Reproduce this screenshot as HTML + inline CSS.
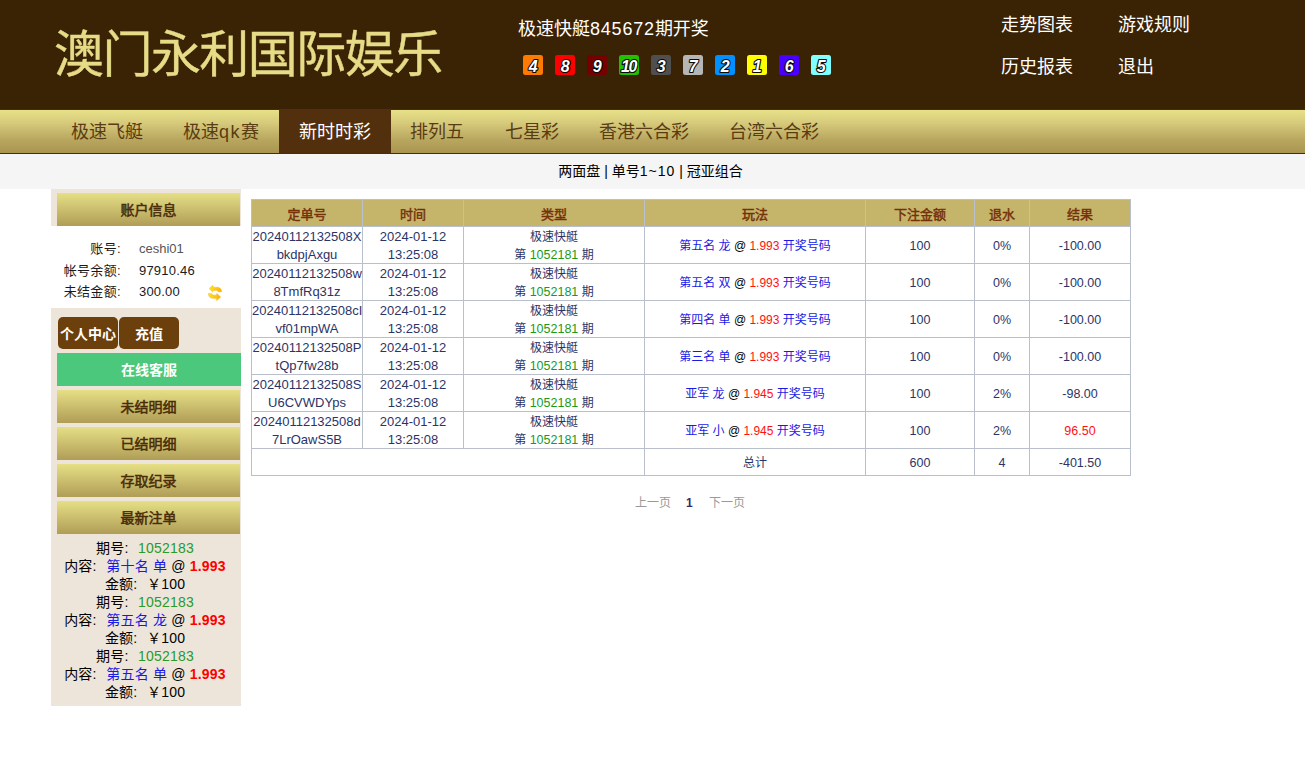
<!DOCTYPE html>
<html lang="zh-CN">
<head>
<meta charset="utf-8">
<title>澳门永利国际娱乐</title>
<style>
*{box-sizing:border-box;margin:0;padding:0}
html,body{width:1305px;height:767px;overflow:hidden;background:#fff}
body{font-family:"Liberation Sans","Noto Sans CJK SC",sans-serif;font-size:13px;color:#333;position:relative}
.hd{position:absolute;left:0;top:0;width:1305px;height:109px;background:#3a2304}
.logo{position:absolute;left:54px;top:19.5px;font-size:50px;line-height:70px;color:#e6dc87;white-space:nowrap;letter-spacing:-1.55px;-webkit-text-stroke:.4px #e6dc87}
.kj{position:absolute;left:518px;top:16px;font-size:18px;line-height:26px;color:#fff;white-space:nowrap}
.tl{position:absolute;color:#fff;font-size:18px;line-height:26px;white-space:nowrap}
.hd{height:110px}.nav{position:absolute;left:0;top:109px;width:1305px;height:45px;background:linear-gradient(#e8e188,#d6ca7b 30%,#b8a65e 70%,#a9954f);border-bottom:1px solid #4a2b0a;border-top:1px solid #4a2b0a}
.nav a{position:absolute;top:0;height:43px;line-height:45px;font-size:18px;color:#5b3b12;white-space:nowrap}
.nav a.on{background:#52300e;color:#fff;text-align:center;top:-1px;height:44px;line-height:47px}
.sub{position:absolute;left:0;top:154px;width:1305px;height:35px;background:#f5f5f5;text-align:center;font-size:14px;line-height:35px;color:#000;padding-right:4px}
.side{position:absolute;left:51px;top:189px;width:190px;height:517px;background:#ede5da}
.gb{position:absolute;left:6px;width:183px;height:33px;background:linear-gradient(#e6df86,#b09d57);color:#4a2c08;font-weight:normal;-webkit-text-stroke:.5px #4a2c08;font-size:14px;line-height:35px;text-align:center}
.info{position:absolute;left:0;top:37px;width:190px;height:82px;background:#fff}
.info div{position:absolute;font-size:13px;line-height:20px;color:#1a1a1a;white-space:nowrap}.info .lb{right:120px;letter-spacing:.35px}.info .vl{left:88px;letter-spacing:.2px}
.bb{position:absolute;top:128px;height:32px;background:#6b400c;border-radius:5px;color:#fff;font-weight:bold;font-size:14px;line-height:35px;overflow:hidden;text-align:center;white-space:nowrap}
.kf{position:absolute;left:6px;top:164px;width:184px;height:33px;background:#4bc87c;color:#fff;font-weight:bold;font-size:14px;line-height:35px;text-align:center}
.bets{position:absolute;left:-2px;top:350px;width:192px;text-align:center;font-size:14px;line-height:18px;color:#000;letter-spacing:.2px;white-space:nowrap}.bets i{font-style:normal;margin-right:5.5px}
.bets .g{color:#2a9a2a}.bets .b{color:#1a1ae0}.bets .r{color:#ff0000;font-weight:bold}
table{position:absolute;left:251px;top:199px;border-collapse:collapse;table-layout:fixed;width:879px;font-size:13px;color:#333}
td,th{border:1px solid #b9c0cb;text-align:center;padding:0}
th{background:#c5b56a;color:#75300a;font-weight:normal;-webkit-text-stroke:.45px #75300a;height:27px;font-size:13px}
td{height:37px;line-height:18px;background:#fff;color:#2b3467;font-size:13px}td>p{position:relative;top:1px}
td:nth-child(3),td:nth-child(4){font-size:12px}td:nth-child(3) .g{font-size:12.5px}td:nth-child(n+5){font-size:12.5px}tr.tot td{font-size:12.5px}tr.tot td:nth-child(2){font-size:12px}
tr.tot td{height:27px}
.g{color:#1a9a1a}.b{color:#1a1ae6}.r{color:#f11}
.pg{position:absolute;top:493.5px;font-size:12px;line-height:18px;color:#999;white-space:nowrap}
.pg b{color:#3a2a6a}
</style>
</head>
<body>
<div class="hd">
  <div class="logo">澳门永利国际娱乐</div>
  <div class="kj">极速快艇<span style="letter-spacing:.8px">845672</span>期开奖</div>
  <svg class="balls" width="310" height="22" viewBox="0 0 310 22" style="position:absolute;left:523px;top:54px" font-family="Liberation Sans, sans-serif" font-weight="bold" font-style="italic" font-size="16" text-anchor="middle" fill="#fff" stroke="#0a0a0a" stroke-width="2.2" stroke-linejoin="round" paint-order="stroke">
    <rect x="0" y="1" width="20" height="20" rx="2.5" fill="#ff7a00" stroke="none"/><text x="10.3" y="17.8">4</text>
    <rect x="32" y="1" width="20" height="20" rx="2.5" fill="#ff0000" stroke="none"/><text x="42.3" y="17.8">8</text>
    <rect x="64" y="1" width="20" height="20" rx="2.5" fill="#760000" stroke="none"/><text x="74.3" y="17.8">9</text>
    <rect x="96" y="1" width="20" height="20" rx="2.5" fill="#22c000" stroke="none"/><text x="105.6" y="17.8" letter-spacing="-1.2">10</text>
    <rect x="128" y="1" width="20" height="20" rx="2.5" fill="#4f4f4f" stroke="none"/><text x="138.3" y="17.8">3</text>
    <rect x="160" y="1" width="20" height="20" rx="2.5" fill="#b6b6b6" stroke="none"/><text x="170.3" y="17.8">7</text>
    <rect x="192" y="1" width="20" height="20" rx="2.5" fill="#0090ff" stroke="none"/><text x="202.3" y="17.8">2</text>
    <rect x="224" y="1" width="20" height="20" rx="2.5" fill="#ffff00" stroke="none"/><text x="234.3" y="17.8">1</text>
    <rect x="256" y="1" width="20" height="20" rx="2.5" fill="#4a00ff" stroke="none"/><text x="266.3" y="17.8">6</text>
    <rect x="288" y="1" width="20" height="20" rx="2.5" fill="#80ffff" stroke="none"/><text x="298.3" y="17.8">5</text>
  </svg>
  <div class="tl" style="left:1001px;top:12px">走势图表</div>
  <div class="tl" style="left:1118px;top:12px">游戏规则</div>
  <div class="tl" style="left:1001px;top:54px">历史报表</div>
  <div class="tl" style="left:1118px;top:54px">退出</div>
</div>
<div class="nav">
  <a style="left:71px">极速飞艇</a>
  <a style="left:183px">极速<span style="letter-spacing:1.5px">qk</span>赛</a>
  <a class="on" style="left:279px;width:112px">新时时彩</a>
  <a style="left:410px">排列五</a>
  <a style="left:505px">七星彩</a>
  <a style="left:599px">香港六合彩</a>
  <a style="left:729px">台湾六合彩</a>
</div>
<div class="sub">两面盘 | 单号<span style="letter-spacing:1px">1~10</span> | 冠亚组合</div>
<div class="side">
  <div class="gb" style="top:4px">账户信息</div>
  <div class="info">
    <div class="lb" style="top:13px">账号:</div><div class="vl" style="top:13px;color:#555;letter-spacing:0">ceshi01</div>
    <div class="lb" style="top:34.5px">帐号余额:</div><div class="vl" style="top:34.5px">97910.46</div>
    <div class="lb" style="top:56px">未结金额:</div><div class="vl" style="top:56px">300.00</div>
    <svg style="position:absolute;left:149px;top:52px" width="30" height="30" viewBox="0 0 767 767"><defs><linearGradient id="ga" x1="0" x2="1" y1="0" y2="0"><stop offset="0" stop-color="#ffe22a"/><stop offset="1" stop-color="#ffae00"/></linearGradient></defs><path fill="url(#ga)" stroke="#e8b93a" stroke-width="10" stroke-linejoin="round" d="M232,270 L330,188 L340,235 L460,235 Q540,245 560,350 L470,355 Q455,320 420,318 L337,320 L327,362 Z"/><path fill="url(#ga)" stroke="#e8b93a" stroke-width="10" stroke-linejoin="round" d="M530,485 L425,392 L420,438 L340,436 Q305,430 295,398 L210,395 Q215,500 300,520 L420,527 L425,580 Z"/></svg>
  </div>
  <div class="bb" style="left:7px;width:60px">个人中心</div>
  <div class="bb" style="left:68px;width:60px">充值</div>
  <div class="kf">在线客服</div>
  <div class="gb" style="top:201px">未结明细</div>
  <div class="gb" style="top:238px">已结明细</div>
  <div class="gb" style="top:275px">存取纪录</div>
  <div class="gb" style="top:312px">最新注单</div>
  <div class="bets">
    <div>期号<i>:</i> <span class="g">1052183</span></div>
    <div>内容<i>:</i> <span class="b">第十名 单</span> <span style="color:#000">@</span> <span class="r">1.993</span></div>
    <div>金额<i>:</i> ￥100</div>
    <div>期号<i>:</i> <span class="g">1052183</span></div>
    <div>内容<i>:</i> <span class="b">第五名 龙</span> <span style="color:#000">@</span> <span class="r">1.993</span></div>
    <div>金额<i>:</i> ￥100</div>
    <div>期号<i>:</i> <span class="g">1052183</span></div>
    <div>内容<i>:</i> <span class="b">第五名 单</span> <span style="color:#000">@</span> <span class="r">1.993</span></div>
    <div>金额<i>:</i> ￥100</div>
  </div>
</div>
<table>
<colgroup><col style="width:111px"><col style="width:101px"><col style="width:181px"><col style="width:221px"><col style="width:109px"><col style="width:55px"><col style="width:101px"></colgroup>
<tr><th>定单号</th><th>时间</th><th>类型</th><th>玩法</th><th>下注金额</th><th>退水</th><th>结果</th></tr>
<tr><td><p>20240112132508X<br>bkdpjAxgu</p></td><td><p>2024-01-12<br>13:25:08</p></td><td><p>极速快艇<br>第 <span class="g">1052181</span> 期</p></td><td><p><span class="b">第五名 龙</span> <span style="color:#000">@</span> <span class="r">1.993</span> <span class="b">开奖号码</span></p></td><td><p>100</p></td><td><p>0%</p></td><td><p>-100.00</p></td></tr>
<tr><td><p>20240112132508w<br>8TmfRq31z</p></td><td><p>2024-01-12<br>13:25:08</p></td><td><p>极速快艇<br>第 <span class="g">1052181</span> 期</p></td><td><p><span class="b">第五名 双</span> <span style="color:#000">@</span> <span class="r">1.993</span> <span class="b">开奖号码</span></p></td><td><p>100</p></td><td><p>0%</p></td><td><p>-100.00</p></td></tr>
<tr><td><p>20240112132508cI<br>vf01mpWA</p></td><td><p>2024-01-12<br>13:25:08</p></td><td><p>极速快艇<br>第 <span class="g">1052181</span> 期</p></td><td><p><span class="b">第四名 单</span> <span style="color:#000">@</span> <span class="r">1.993</span> <span class="b">开奖号码</span></p></td><td><p>100</p></td><td><p>0%</p></td><td><p>-100.00</p></td></tr>
<tr><td><p>20240112132508P<br>tQp7fw28b</p></td><td><p>2024-01-12<br>13:25:08</p></td><td><p>极速快艇<br>第 <span class="g">1052181</span> 期</p></td><td><p><span class="b">第三名 单</span> <span style="color:#000">@</span> <span class="r">1.993</span> <span class="b">开奖号码</span></p></td><td><p>100</p></td><td><p>0%</p></td><td><p>-100.00</p></td></tr>
<tr><td><p>20240112132508S<br>U6CVWDYps</p></td><td><p>2024-01-12<br>13:25:08</p></td><td><p>极速快艇<br>第 <span class="g">1052181</span> 期</p></td><td><p><span class="b">亚军 龙</span> <span style="color:#000">@</span> <span class="r">1.945</span> <span class="b">开奖号码</span></p></td><td><p>100</p></td><td><p>2%</p></td><td><p>-98.00</p></td></tr>
<tr><td><p>20240112132508d<br>7LrOawS5B</p></td><td><p>2024-01-12<br>13:25:08</p></td><td><p>极速快艇<br>第 <span class="g">1052181</span> 期</p></td><td><p><span class="b">亚军 小</span> <span style="color:#000">@</span> <span class="r">1.945</span> <span class="b">开奖号码</span></p></td><td><p>100</p></td><td><p>2%</p></td><td class="r"><p>96.50</p></td></tr>
<tr class="tot"><td colspan="3"><p></p></td><td><p>总计</p></td><td><p>600</p></td><td><p>4</p></td><td><p>-401.50</p></td></tr>
</table>
<div class="pg" style="left:635px">上一页</div><div class="pg" style="left:686px"><b>1</b></div><div class="pg" style="left:709px">下一页</div>
</body>
</html>
